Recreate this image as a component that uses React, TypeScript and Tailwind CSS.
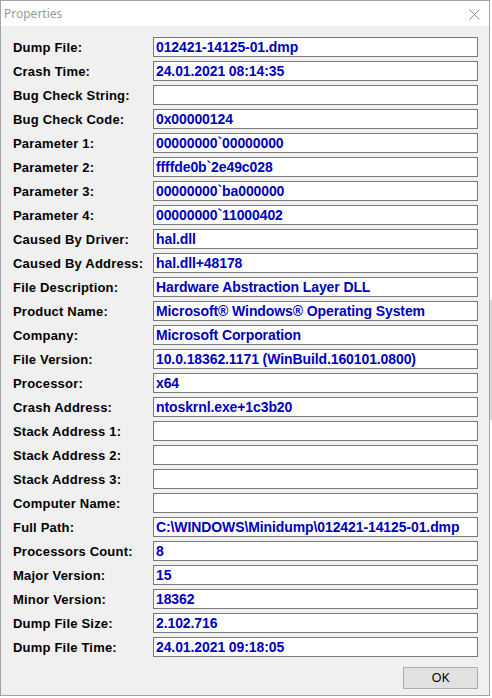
const rows: [string, string][] = [
  ["Dump File:", "012421-14125-01.dmp"],
  ["Crash Time:", "24.01.2021 08:14:35"],
  ["Bug Check String:", ""],
  ["Bug Check Code:", "0x00000124"],
  ["Parameter 1:", "00000000`00000000"],
  ["Parameter 2:", "ffffde0b`2e49c028"],
  ["Parameter 3:", "00000000`ba000000"],
  ["Parameter 4:", "00000000`11000402"],
  ["Caused By Driver:", "hal.dll"],
  ["Caused By Address:", "hal.dll+48178"],
  ["File Description:", "Hardware Abstraction Layer DLL"],
  ["Product Name:", "Microsoft® Windows® Operating System"],
  ["Company:", "Microsoft Corporation"],
  ["File Version:", "10.0.18362.1171 (WinBuild.160101.0800)"],
  ["Processor:", "x64"],
  ["Crash Address:", "ntoskrnl.exe+1c3b20"],
  ["Stack Address 1:", ""],
  ["Stack Address 2:", ""],
  ["Stack Address 3:", ""],
  ["Computer Name:", ""],
  ["Full Path:", "C:\\WINDOWS\\Minidump\\012421-14125-01.dmp"],
  ["Processors Count:", "8"],
  ["Major Version:", "15"],
  ["Minor Version:", "18362"],
  ["Dump File Size:", "2.102.716"],
  ["Dump File Time:", "24.01.2021 09:18:05"],
];

function Field({ label, value }: { label: string; value: string }) {
  return (
    <div className="flex h-5 items-center">
      <div className="w-[141px] shrink-0 pl-[1px] text-[13px] font-bold leading-none tracking-[0.2px] text-black">
        {label}
      </div>
      <div className="flex h-5 w-[325px] items-center overflow-hidden whitespace-nowrap border border-[#7a7a7a] bg-white pl-[2px] text-[14px] font-bold leading-none tracking-[-0.1px] text-[#0000c0]">
        {value}
      </div>
    </div>
  );
}

export default function App() {
  return (
    <div className="relative h-[698px] w-[492px] overflow-hidden bg-white font-['Liberation_Sans',Arial,sans-serif]">
      <div className="flex h-[696px] w-[490px] flex-col border border-[#a3a3a3] bg-[#f0f0f0]">
        <header className="flex h-[25px] shrink-0 items-center justify-between bg-white pl-[3px] pr-[9px]">
          <span className="font-['Noto_Sans',sans-serif] text-[12px] text-[#9a9a9a]">
            Properties
          </span>
          <svg width="11" height="11" viewBox="0 0 11 11" className="mt-[1px]">
            <path d="M0.5 0.5 L10.5 10.5 M10.5 0.5 L0.5 10.5" stroke="#8a8a8a" strokeWidth="1" />
          </svg>
        </header>
        <main className="flex flex-1 flex-col pl-[11px] pt-[11px]">
          <div className="flex flex-col gap-1">
            {rows.map(([label, value]) => (
              <Field key={label} label={label} value={value} />
            ))}
          </div>
          <div className="mt-[10px] flex justify-end pr-[11px]">
            <button
              type="button"
              className="h-[22px] w-[75px] border border-[#adadad] bg-[#e1e1e1] font-['Noto_Sans',sans-serif] text-[13px] text-black"
            >
              OK
            </button>
          </div>
        </main>
      </div>
      <div className="absolute right-0 top-[300px] h-[120px] w-[2px] bg-[#d8d8d8]" />
    </div>
  );
}
